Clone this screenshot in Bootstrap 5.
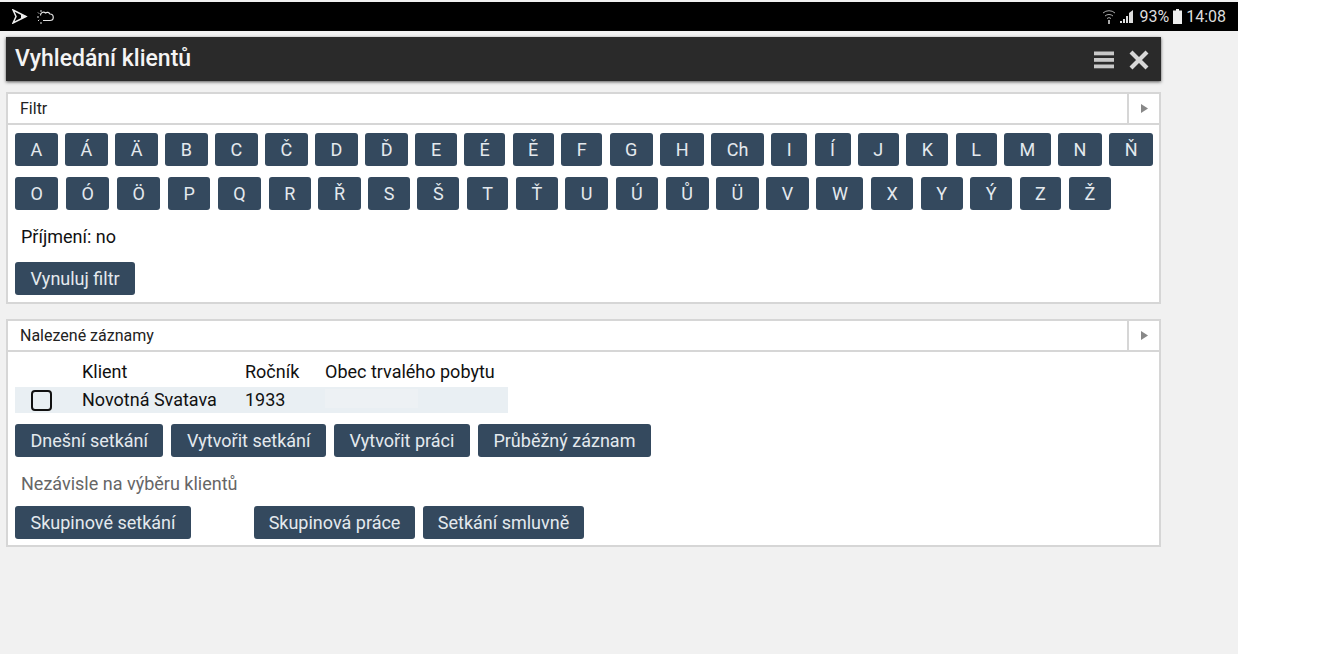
<!DOCTYPE html>
<html lang="cs">
<head>
<meta charset="utf-8">
<title>Vyhledání klientů</title>
<link href="https://cdn.jsdelivr.net/npm/bootstrap@5.3.0/dist/css/bootstrap.min.css" rel="stylesheet">
<style>
html,body{height:654px;overflow:hidden;background:#fff}
body{font-family:Roboto,sans-serif;font-size:18px;color:#111}
.phone-shell{width:1238px;height:654px;background:#f1f1f1;padding-top:2px}
.status-strip{height:29px;background:#000;color:#ddd;padding:0 12px 0 12px;font-size:16px}
.status-strip svg{display:block}
.page-body{width:1155px;margin-left:6px}
.title-strip{height:44px;margin-top:6px;background:#2a2a2a;color:#f4f4f4;padding:1px 12px 0 9px;font-size:23px;font-weight:500;box-shadow:0 1px 3px #555}
.title-icons{gap:15px}
.panel-box{background:#fff;border:2px solid #d6d6d6}
.panel-one{margin-top:11px;height:212px}
.panel-two{margin-top:15px;height:228px}
.panel-head{height:31px;border-bottom:2px solid #d6d6d6;font-size:16px;padding-left:12px;color:#222}
.panel-arrow{width:32px;border-left:2px solid #d6d6d6}
.panel-main{padding:8px 7px 7px}
.act-btn{background:#34495e;color:#e4e9ee;border:0;border-radius:3px;height:33px;padding:0 15.5px;font-size:18px;line-height:33px;white-space:nowrap}
.act-tight{padding:0 14.7px}
.letter-first{gap:7.36px;margin-bottom:11px}
.letter-second{gap:7.58px}
.info-line{margin:15px 0 13px 6px;line-height:24px}
.rec-head,.rec-row{display:grid;grid-template-columns:67px 163px 80px 183px;width:493px;line-height:24px}
.rec-head{height:24px}
.rec-row{background:#e9eff3;height:26px;margin-top:3px;line-height:25px}
.rec-check{width:21px;height:21px;border:2px solid #111;border-radius:4px;margin:3px 0 0 16px}
.rec-blur{background:#edf1f4;margin:2px 90px 5px 0}
.rec-btns{gap:8px;margin-top:11px}
.muted-line{margin:15px 0 10px 6px;line-height:24px;color:#666}
.gap-wide{margin-left:55px}
</style>
</head>
<body>
<div class="phone-shell">
  <div class="status-strip d-flex align-items-center justify-content-between">
    <div class="d-flex align-items-center gap-2">
      <svg width="16" height="15" viewBox="0 0 16 15"><path d="M1 1 L14 7.500 L1 14 L4 7.500 Z" fill="none" stroke="#eee" stroke-width="1.500"/><path d="M9 5 L15 7.500 L9 10 Z" fill="#eee"/></svg>
      <svg width="18" height="16" viewBox="0 0 18 16" fill="none" stroke="#e4e4e4" stroke-width="1.200"><path d="M4.500 6.500a3 3 0 0 1 5-2.500a3 3 0 0 1 4.500 1a3.200 3.200 0 0 1 0 6.500H7"/><path d="M5 1v2M1 8h2M2 3.500l1.200 1.200M2 12l1.200-1.200M5 13v2" stroke-width="1"/></svg>
    </div>
    <div class="d-flex align-items-center">
      <svg width="14" height="16" viewBox="0 0 14 16" fill="none" stroke="#aaa" stroke-width="1"><path d="M1 4a9 9 0 0 1 12 0M3 7a6 6 0 0 1 8 0M5 9.500a3 3 0 0 1 4 0"/><path d="M7 11v4" stroke-width="2"/></svg>
      <svg class="ms-1" width="15" height="14" viewBox="0 0 15 14" fill="#ddd"><rect x="0" y="11" width="2" height="2"/><rect x="3" y="9" width="2" height="4"/><rect x="6" y="6" width="2" height="7"/><path d="M9 13V3l4-3v13z"/></svg>
      <span class="ms-1">93%</span>
      <svg class="ms-1" width="9" height="15" viewBox="0 0 9 15" fill="#eee"><rect x="3" y="0" width="3" height="2"/><rect x="0" y="1.500" width="9" height="13.500"/></svg>
      <span class="ms-1">14:08</span>
    </div>
  </div>
  <div class="page-body">
    <div class="title-strip d-flex align-items-center justify-content-between">
      <span>Vyhledání klientů</span>
      <div class="d-flex align-items-center title-icons">
        <svg width="20" height="18" viewBox="0 0 20 18" fill="#c8c8c8"><rect y="0.500" width="20" height="3.800"/><rect y="7" width="20" height="3.800"/><rect y="13.500" width="20" height="3.800"/></svg>
        <svg width="20" height="20" viewBox="0 0 20 20" stroke="#d8d8d8" stroke-width="4.200"><path d="M2 2 L18 18M18 2 L2 18"/></svg>
      </div>
    </div>
    <div class="panel-box panel-one">
      <div class="panel-head d-flex justify-content-between align-items-stretch">
        <span class="align-self-center">Filtr</span>
        <div class="panel-arrow d-flex align-items-center justify-content-center"><svg width="7" height="9" viewBox="0 0 7 9"><path d="M0 0L7 4.500L0 9Z" fill="#888"/></svg></div>
      </div>
      <div class="panel-main">
        <div class="d-flex letter-first">
          <button class="act-btn">A</button><button class="act-btn">Á</button><button class="act-btn">Ä</button><button class="act-btn">B</button><button class="act-btn">C</button><button class="act-btn">Č</button><button class="act-btn">D</button><button class="act-btn">Ď</button><button class="act-btn">E</button><button class="act-btn">É</button><button class="act-btn">Ě</button><button class="act-btn">F</button><button class="act-btn">G</button><button class="act-btn">H</button><button class="act-btn">Ch</button><button class="act-btn">I</button><button class="act-btn">Í</button><button class="act-btn">J</button><button class="act-btn">K</button><button class="act-btn">L</button><button class="act-btn">M</button><button class="act-btn">N</button><button class="act-btn">Ň</button>
        </div>
        <div class="d-flex letter-second">
          <button class="act-btn">O</button><button class="act-btn">Ó</button><button class="act-btn">Ö</button><button class="act-btn">P</button><button class="act-btn">Q</button><button class="act-btn">R</button><button class="act-btn">Ř</button><button class="act-btn">S</button><button class="act-btn">Š</button><button class="act-btn">T</button><button class="act-btn">Ť</button><button class="act-btn">U</button><button class="act-btn">Ú</button><button class="act-btn">Ů</button><button class="act-btn">Ü</button><button class="act-btn">V</button><button class="act-btn">W</button><button class="act-btn">X</button><button class="act-btn">Y</button><button class="act-btn">Ý</button><button class="act-btn">Z</button><button class="act-btn">Ž</button>
        </div>
        <div class="info-line">Příjmení: no</div>
        <button class="act-btn">Vynuluj filtr</button>
      </div>
    </div>
    <div class="panel-box panel-two">
      <div class="panel-head d-flex justify-content-between align-items-stretch">
        <span class="align-self-center">Nalezené záznamy</span>
        <div class="panel-arrow d-flex align-items-center justify-content-center"><svg width="7" height="9" viewBox="0 0 7 9"><path d="M0 0L7 4.500L0 9Z" fill="#888"/></svg></div>
      </div>
      <div class="panel-main">
        <div class="rec-head"><span></span><span>Klient</span><span>Ročník</span><span>Obec trvalého pobytu</span></div>
        <div class="rec-row"><div class="rec-check"></div><span>Novotná Svatava</span><span>1933</span><span class="rec-blur"></span></div>
        <div class="d-flex rec-btns"><button class="act-btn">Dnešní setkání</button><button class="act-btn">Vytvořit setkání</button><button class="act-btn">Vytvořit práci</button><button class="act-btn">Průběžný záznam</button></div>
        <div class="muted-line">Nezávisle na výběru klientů</div>
        <div class="d-flex gap-2"><button class="act-btn">Skupinové setkání</button><button class="act-btn act-tight gap-wide">Skupinová práce</button><button class="act-btn act-tight">Setkání smluvně</button></div>
      </div>
    </div>
  </div>
</div>
<script src="https://cdn.jsdelivr.net/npm/bootstrap@5.3.0/dist/js/bootstrap.bundle.min.js"></script>
</body>
</html>
